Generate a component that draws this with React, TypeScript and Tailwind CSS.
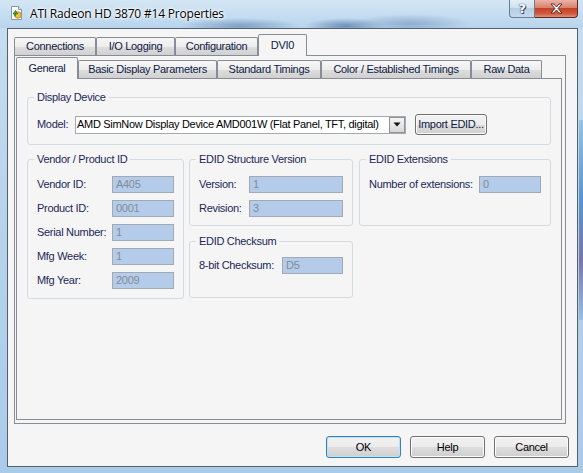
import React from "react";

const TAB_BORDER = "border-[#898c95]";
const tabBg =
  "bg-[linear-gradient(180deg,#f6f6f6_0%,#ededed_50%,#dedede_51%,#d0d0d0_100%)]";

function OuterTab({ label, w, selected }: { label: string; w: number; selected?: boolean }) {
  if (selected) {
    return (
      <div
        className={`relative z-10 -mb-px h-[22px] border border-b-0 ${TAB_BORDER} bg-[#f5f5f5] flex items-center justify-center text-[#0e1a44] pb-[1px] rounded-t-[2px]`}
        style={{ width: w }}
      >
        {label}
      </div>
    );
  }
  return (
    <div
      className={`h-[18px] border border-b-0 ${TAB_BORDER} ${tabBg} flex items-center justify-center text-[#0e1a44] rounded-t-[2px]`}
      style={{ width: w }}
    >
      {label}
    </div>
  );
}

function Field({ label, labelW, inputW, value }: { label: string; labelW: number; inputW: number; value: string }) {
  return (
    <div className="flex items-center h-[17px]">
      <div className="text-[#1c2758] whitespace-nowrap" style={{ width: labelW }}>
        {label}
      </div>
      <div
        className="h-[17px] border border-[#a2a9b3] bg-[#b4cbea] text-[#838b96] pl-[3px] flex items-center"
        style={{ width: inputW }}
      >
        {value}
      </div>
    </div>
  );
}

function Group({
  title,
  className,
  children,
}: {
  title: string;
  className?: string;
  children: React.ReactNode;
}) {
  return (
    <fieldset className={`border border-[#d5dadf] rounded-[3px] ${className ?? ""}`}>
      <legend className="ml-[6px] px-[3px] text-[#1c2758] leading-[13px]">{title}</legend>
      {children}
    </fieldset>
  );
}

function DlgButton({ label, def }: { label: string; def?: boolean }) {
  return (
    <div
      className={`w-[75px] h-[22px] rounded-[3px] border ${
        def ? "border-[#3c7fb1] shadow-[inset_0_0_0_1px_#b9e4f8]" : "border-[#707070] shadow-[inset_0_0_0_1px_#fbfbfb]"
      } bg-[linear-gradient(180deg,#f2f2f2_0%,#ebebeb_50%,#dddddd_51%,#cfcfcf_100%)] flex items-center justify-center text-black`}
    >
      {label}
    </div>
  );
}

export default function App() {
  return (
    <div className="relative w-[583px] h-[473px] overflow-hidden bg-[linear-gradient(180deg,#c8dff1_0%,#b9d4ec_40%,#aacbe8_100%)] font-['Liberation_Sans',Arial,sans-serif] text-[11px] leading-[13px] tracking-[-0.3px]">
      {/* right frame darker strip */}
      <div className="absolute right-0 top-[120px] w-[4px] h-[200px] bg-[linear-gradient(180deg,#8fbbe0,#3f86c6_40%,#6a5f9a_70%,#8fbbe0)] opacity-80" />
      {/* Title bar */}
      <div className="relative h-[28px] flex items-start bg-[radial-gradient(ellipse_60px_8px_at_240px_26px,#7f9fc6_0%,transparent_100%),radial-gradient(ellipse_40px_8px_at_345px_26px,#6e8fb8_0%,transparent_100%),radial-gradient(ellipse_60px_10px_at_410px_24px,#90aed0_0%,transparent_100%),linear-gradient(180deg,#d4e6f5_0%,#c4dcf0_60%,#b8d3ec_100%)]">
        <div className="ml-[9px] mt-[5px] w-[16px] h-[16px]">
          <svg width="16" height="16" viewBox="0 0 16 16">
            <path d="M2.5 1.5h7l3 3v10h-10z" fill="#fdfdfd" stroke="#8a97a8" />
            <path d="M9.5 1.5v3h3" fill="#e4e9ef" stroke="#8a97a8" />
            <circle cx="9" cy="10" r="3.2" fill="#f2c23a" stroke="#b9851a" strokeWidth="0.8" />
            <path d="M4 9 L6.5 5.5 L9 9 Z" fill="#3fa535" stroke="#21711c" strokeWidth="0.6" />
            <path d="M6 8.5v3" stroke="#21711c" strokeWidth="1.2" />
          </svg>
        </div>
        <div className="ml-[5px] mt-[7px] text-[12px] leading-[14px] tracking-[-0.2px] text-black font-['Open_Sans',sans-serif] [text-shadow:0_0_5px_#ffffff,0_0_3px_#ffffff,0_0_2px_#ffffff]">
          ATI Radeon HD 3870 #14 Properties
        </div>
        <div className="ml-auto mr-[5px] flex">
          <div className="w-[26px] h-[18px] border border-t-0 border-[#6b7f94] rounded-bl-[4px] bg-[linear-gradient(180deg,#e3edf6_0%,#d1e1ee_45%,#b5cde2_50%,#c6dbec_100%)] flex items-center justify-center">
            <span className="text-[13px] leading-[14px] font-bold text-white font-['DejaVu_Sans',sans-serif] [text-shadow:0_0_1px_#34495e,0_0_1px_#34495e,1px_1px_0_#34495e]">
              ?
            </span>
          </div>
          <div className="w-[43px] h-[18px] border border-l-0 border-t-0 border-[#5f2a22] rounded-br-[4px] bg-[linear-gradient(180deg,#eab4a6_0%,#d9826c_45%,#c5412a_50%,#d05a3d_80%,#e0907a_100%)] flex items-center justify-center">
            <svg width="15" height="11" viewBox="0 0 15 11">
              <path
                d="M2 1h3l2.5 3 2.5-3h3l-4 4.5 4 4.5h-3l-2.5-3-2.5 3h-3l4-4.5z"
                fill="#ffffff"
                stroke="#4b2520"
                strokeWidth="0.9"
                strokeLinejoin="round"
              />
            </svg>
          </div>
        </div>
      </div>

      {/* Client area */}
      <div className="ml-[7px] w-[571px] h-[439px] border border-[#54606e] bg-[#f5f5f5] flex flex-col">
        {/* Outer tab control */}
        <div className="ml-[6px] mt-[5px] flex flex-col">
          <div className="flex items-end h-[21px]">
            <OuterTab label="Connections" w={82} />
            <OuterTab label="I/O Logging" w={79} />
            <OuterTab label="Configuration" w={83} />
            <OuterTab label="DVI0" w={49} selected />
          </div>
          <div className={`w-[552px] h-[369px] border ${TAB_BORDER} bg-[#f5f5f5] pl-px pt-px`}>
            {/* Inner tab control */}
            <div className="flex items-end h-[21px]">
              <OuterTab label="General" w={62} selected />
              <OuterTab label="Basic Display Parameters" w={139} />
              <OuterTab label="Standard Timings" w={104} />
              <OuterTab label="Color / Established Timings" w={150} />
              <OuterTab label="Raw Data" w={71} />
            </div>
            <div className={`w-[546px] h-[342px] border ${TAB_BORDER} bg-[#f5f5f5] pl-[10px] pt-[12px]`}>
              <Group title="Display Device" className="w-[524px]">
                <div className="pl-[9px] pt-[10px] pb-[9px] flex items-center">
                  <div className="w-[38px] text-[#1c2758]">Model:</div>
                  <div className="w-[331px] h-[18px] border border-[#a5a9b0] bg-white flex items-center">
                    <div className="flex-1 pl-[1px] text-black whitespace-nowrap overflow-hidden">
                      AMD SimNow Display Device AMD001W (Flat Panel, TFT, digital)
                    </div>
                    <div className="w-[16px] h-[16px] border border-[#8e939a] bg-[linear-gradient(180deg,#f4f4f4_0%,#e6e6e6_50%,#d6d6d6_100%)] flex items-center justify-center">
                      <svg width="8" height="5" viewBox="0 0 8 5">
                        <path d="M0.5 0.5h7l-3.5 4z" fill="#111" />
                      </svg>
                    </div>
                  </div>
                  <div className="ml-[9px] w-[72px] h-[21px] rounded-[3px] border border-[#707070] shadow-[inset_0_0_0_1px_#fbfbfb] bg-[linear-gradient(180deg,#f2f2f2_0%,#ebebeb_50%,#dddddd_51%,#cfcfcf_100%)] flex items-center justify-center text-[#0e1a44]">
                    Import EDID...
                  </div>
                </div>
              </Group>

              <div className="mt-[8px] flex items-start">
                <Group title="Vendor / Product ID" className="w-[157px]">
                  <div className="pl-[9px] pt-[10px] pb-[9px] flex flex-col gap-[7px]">
                    <Field label="Vendor ID:" labelW={75} inputW={62} value="A405" />
                    <Field label="Product ID:" labelW={75} inputW={62} value="0001" />
                    <Field label="Serial Number:" labelW={75} inputW={62} value="1" />
                    <Field label="Mfg Week:" labelW={75} inputW={62} value="1" />
                    <Field label="Mfg Year:" labelW={75} inputW={62} value="2009" />
                  </div>
                </Group>

                <div className="ml-[5px] flex flex-col">
                  <Group title="EDID Structure Version" className="w-[164px]">
                    <div className="pl-[9px] pt-[10px] pb-[8px] flex flex-col gap-[7px]">
                      <Field label="Version:" labelW={50} inputW={94} value="1" />
                      <Field label="Revision:" labelW={50} inputW={94} value="3" />
                    </div>
                  </Group>
                  <Group title="EDID Checksum" className="w-[164px] mt-[9px]">
                    <div className="pl-[9px] pt-[9px] pb-[23px] flex flex-col">
                      <Field label="8-bit Checksum:" labelW={83} inputW={61} value="D5" />
                    </div>
                  </Group>
                </div>

                <Group title="EDID Extensions" className="ml-[6px] w-[192px]">
                  <div className="pl-[9px] pt-[10px] pb-[32px] flex flex-col">
                    <Field label="Number of extensions:" labelW={110} inputW={62} value="0" />
                  </div>
                </Group>
              </div>
            </div>
          </div>
        </div>

        {/* Dialog buttons */}
        <div className="mt-[12px] mr-[8px] flex justify-end gap-[9px]">
          <DlgButton label="OK" def />
          <DlgButton label="Help" />
          <DlgButton label="Cancel" />
        </div>
      </div>
    </div>
  );
}
